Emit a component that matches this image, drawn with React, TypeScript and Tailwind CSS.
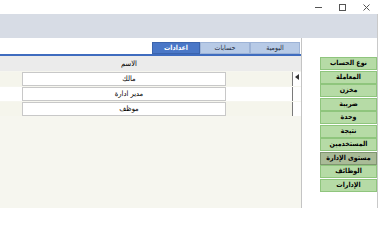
const tabs = [
  { label: "اليومية", active: false },
  { label: "حسابات", active: false },
  { label: "اعدادات", active: true },
];

const rows = ["مالك", "مدير ادارة", "موظف"];

const buttons = [
  "نوع الحساب",
  "المعاملة",
  "مخزن",
  "ضريبة",
  "وحدة",
  "نتيجة",
  "المستخدمين",
  "مستوى الإدارة",
  "الوظائف",
  "الإدارات",
];

export default function App() {
  return (
    <div
      className="w-[379px] h-[208px] bg-white overflow-hidden flex flex-col"
      style={{ fontFamily: '"DejaVu Sans Condensed", "DejaVu Sans", Tahoma, sans-serif' }}
    >
      {/* title bar */}
      <div className="h-[14px] shrink-0 flex items-center justify-end pr-[9px] gap-[17px]">
        <svg width="7" height="7" viewBox="0 0 7 7">
          <path d="M0 3.5H7" stroke="#555" strokeWidth="1" />
        </svg>
        <svg width="7" height="7" viewBox="0 0 7 7">
          <rect x="0.5" y="0.5" width="6" height="6" fill="none" stroke="#555" strokeWidth="1" />
        </svg>
        <svg width="7" height="7" viewBox="0 0 7 7">
          <path d="M0.5 0.5L6.5 6.5M6.5 0.5L0.5 6.5" stroke="#555" strokeWidth="1" />
        </svg>
      </div>

      <div className="flex flex-1">
        <div className="w-[378px] flex flex-col border-r border-[#c9c9c9]">
          {/* toolbar band */}
          <div className="h-[24px] shrink-0 bg-[#d7dce5]" />

          <div className="flex flex-1">
            {/* left panel */}
            <div className="w-[302px] flex flex-col border-r border-[#c4c4c4]">
              {/* tabs */}
              <div className="h-[16px] flex items-end justify-end pr-[1px]" dir="ltr">
                {[...tabs].reverse().map((t) => (
                  <div
                    key={t.label}
                    dir="rtl"
                    className={
                      t.active
                        ? "h-[12px] w-[48px] flex items-center justify-center bg-[#4a77c7] border border-[#3b64ad] text-white text-[7px] font-bold leading-none"
                        : "h-[12px] w-[50px] flex items-center justify-center bg-[#b7cae6] border border-[#9db3d6] text-[#1e2a40] text-[7px] leading-none"
                    }
                  >
                    {t.label}
                  </div>
                ))}
              </div>
              <div className="h-[2px] bg-[#3f6cbf]" />

              {/* grid */}
              <div className="flex-1 bg-[#f6f6ef] flex flex-col">
                <div className="h-[15px] bg-[#ebebeb] flex">
                  <div className="w-[22px]" />
                  <div
                    dir="rtl"
                    className="w-[204px] flex items-center justify-center pl-[10px] text-[7.5px] text-black"
                  >
                    الاسم
                  </div>
                </div>
                <div className="h-px" />
                {rows.map((r, i) => (
                  <div
                    key={r}
                    className={`h-[14px] mb-px flex ${i % 2 === 1 ? "bg-white" : "bg-[#f5f5ec]"}`}
                  >
                    <div className="w-[22px]" />
                    <div
                      dir="rtl"
                      className="w-[204px] bg-white border border-[#c8c8c8] flex items-center justify-center pl-[10px] text-[7.5px] text-black"
                    >
                      {r}
                    </div>
                    <div className="flex-1" />
                    <div className="w-[9px] bg-white border-l border-[#7a7a7a] flex items-start justify-center pt-[2px]">
                      {i === 0 && (
                        <svg width="4" height="6" viewBox="0 0 4 6">
                          <path d="M4 0L0 3L4 6Z" fill="#333" />
                        </svg>
                      )}
                    </div>
                  </div>
                ))}
              </div>
            </div>

            {/* right panel with green buttons */}
            <div className="flex-1 bg-white flex flex-col items-end pt-[19px]">
              {buttons.map((b) => {
                const sel = b === "مستوى الإدارة";
                return (
                  <div
                    key={b}
                    dir="rtl"
                    className={
                      sel
                        ? "w-[57px] h-[13px] mb-[0.5px] flex items-center justify-center bg-[#a9bb97] border border-[#7f9670] text-[7px] font-bold text-black leading-none whitespace-nowrap"
                        : "w-[57px] h-[13px] mb-[0.5px] flex items-center justify-center bg-[#b6dba6] border border-[#8fc57d] text-[7px] font-bold text-black leading-none whitespace-nowrap"
                    }
                  >
                    {b}
                  </div>
                );
              })}
            </div>
          </div>
        </div>
      </div>
    </div>
  );
}
